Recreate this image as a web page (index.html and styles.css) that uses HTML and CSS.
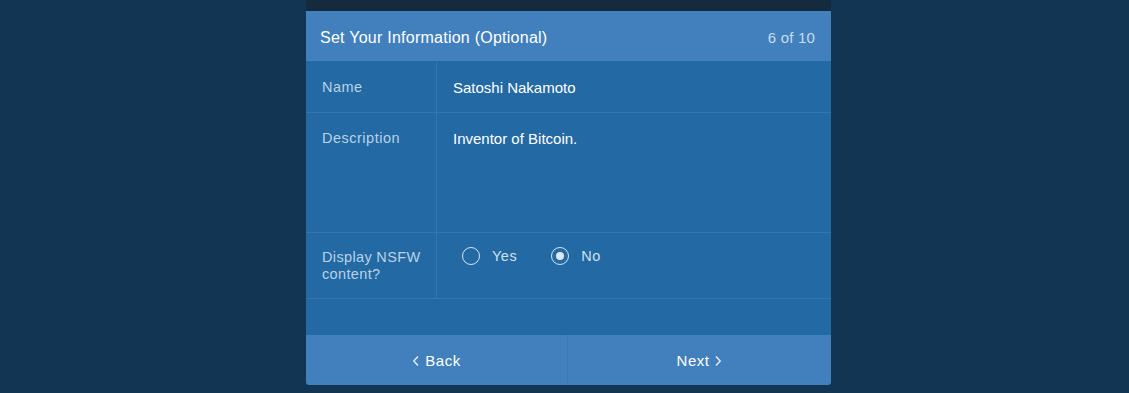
FILE: index.html
```html
<!DOCTYPE html>
<html>
<head>
<meta charset="utf-8">
<link rel="stylesheet" href="styles.css">
</head>
<body>
<div class="page">
  <div class="panel">
    <div class="topstrip"></div>
    <div class="header">
      <span class="title">Set Your Information (Optional)</span>
      <span class="step">6 of 10</span>
    </div>
    <div class="body">
      <div class="row row-name">
        <div class="label">Name</div>
        <div class="value">Satoshi Nakamoto</div>
      </div>
      <div class="row row-desc">
        <div class="label">Description</div>
        <div class="value">Inventor of Bitcoin.</div>
      </div>
      <div class="row row-nsfw">
        <div class="label">Display NSFW<br>content?</div>
        <div class="value radios">
          <span class="radio"><span class="circle"></span>Yes</span>
          <span class="radio"><span class="circle checked"></span>No</span>
        </div>
      </div>
      <div class="spacer"></div>
    </div>
    <div class="footer">
      <div class="btn back"><svg class="chev" width="8" height="12" viewBox="0 0 8 12"><path d="M6 1.5L1.8 6L6 10.5" fill="none" stroke="#e6eff8" stroke-width="1.4"/></svg>Back</div>
      <div class="btn next">Next<svg class="chev" width="8" height="12" viewBox="0 0 8 12"><path d="M2 1.5L6.2 6L2 10.5" fill="none" stroke="#e6eff8" stroke-width="1.4"/></svg></div>
    </div>
  </div>
</div>
</body>
</html>
```
FILE: styles.css
```css
html, body {
  margin: 0;
  padding: 0;
  background: #133554;
  height: 100%;
}
body {
  font-family: "Liberation Sans", Arial, sans-serif;
  -webkit-font-smoothing: antialiased;
}
.page {
  display: flex;
  justify-content: center;
  padding-left: 8px;
}
.panel {
  width: 525px;
  display: flex;
  flex-direction: column;
}
.topstrip {
  height: 11px;
  background: #152a3f;
}
.header {
  height: 50px;
  box-sizing: border-box;
  background: #4280bd;
  display: flex;
  align-items: center;
  justify-content: space-between;
  padding: 3px 16px 0 14px;
}
.title {
  color: #ffffff;
  font-size: 16px;
  letter-spacing: 0.25px;
}
.step {
  color: #c6dcf0;
  font-size: 15px;
  letter-spacing: 0.2px;
}
.body {
  background: #2369a3;
}
.row {
  display: flex;
  border-bottom: 1px solid #3576ad;
}
.label {
  width: 131px;
  flex: none;
  box-sizing: border-box;
  border-right: 1px solid #3576ad;
  padding: 17px 4px 0 16px;
  color: #b9d2e8;
  font-size: 14.5px;
  line-height: 18px;
  letter-spacing: 0.5px;
  white-space: nowrap;
}
.value {
  flex: 1;
  padding: 18px 16px 0;
  color: #ffffff;
  font-size: 15px;
  line-height: 18px;
}
.row-name { height: 51px; }
.row-name .label { padding-top: 17px; }
.row-desc { height: 119px; }
.row-desc .label { padding-top: 16px; }
.row-desc .value { padding-top: 17px; }
.row-nsfw { height: 65px; }
.row-nsfw .label { padding-top: 16px; line-height: 17px; letter-spacing: 0.35px; }
.row-nsfw .value { padding-top: 14px; padding-left: 25px; }
.radios {
  display: flex;
  align-items: flex-start;
  gap: 34px;
  color: #cfe0f0;
}
.radio {
  display: flex;
  align-items: center;
  gap: 12px;
  font-size: 14.5px;
  letter-spacing: 0.5px;
}
.circle {
  width: 18px;
  height: 18px;
  border: 1.5px solid #d6e6f4;
  border-radius: 50%;
  box-sizing: border-box;
  display: inline-flex;
  align-items: center;
  justify-content: center;
}
.circle.checked::after {
  content: "";
  width: 8px;
  height: 8px;
  border-radius: 50%;
  background: #dbe9f5;
}
.spacer { height: 36px; }
.footer {
  height: 50px;
  background: #4280bd;
  display: flex;
  border-radius: 0 0 3px 3px;
}
.btn {
  display: flex;
  align-items: center;
  justify-content: center;
  gap: 5px;
  color: #ffffff;
  font-size: 15px;
  letter-spacing: 0.5px;
}
.chev { margin-top: 1px; }
.back { flex: 0 0 261px; }
.next { flex: 1; border-left: 1px solid #3a78b2; }
```
